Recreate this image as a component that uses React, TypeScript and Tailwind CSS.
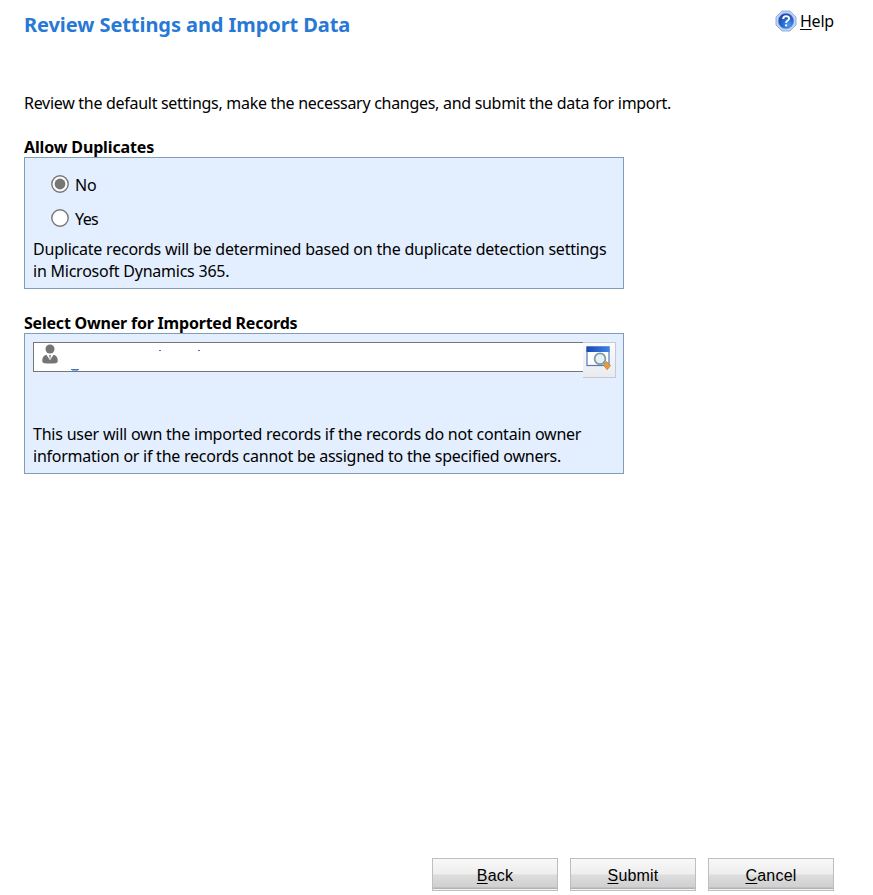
import type { ReactNode } from "react";

function Radio({ checked }: { checked?: boolean }) {
  return (
    <svg width="18" height="18" viewBox="0 0 18 18" className="mb-[2px] block shrink-0">
      <circle cx="9" cy="9" r="8.2" fill="#fff" stroke="#767676" strokeWidth="1.4" />
      {checked && <circle cx="9" cy="9" r="5.4" fill="#767676" />}
    </svg>
  );
}

function HelpIcon() {
  return (
    <svg width="22" height="22" viewBox="0 0 22 22" className="block shrink-0">
      <defs>
        <radialGradient id="helpFill" cx="0.65" cy="0.75" r="0.75">
          <stop offset="0" stopColor="#4b9bf0" />
          <stop offset="0.55" stopColor="#2865d0" />
          <stop offset="1" stopColor="#1d45ae" />
        </radialGradient>
      </defs>
      <path d="M7 1h8l6 6v8l-6 6H7l-6-6V7z" fill="#c3d5ee" stroke="#8fafdc" strokeWidth="1" strokeLinejoin="round" />
      <circle cx="11" cy="11" r="7.8" fill="url(#helpFill)" stroke="#7fa5df" strokeWidth="0.6" />
      <path d="M8.2 8.9c0-3.6 5.9-3.5 5.9-.5 0 2.1-3 2.2-3 4.5" fill="none" stroke="#fff" strokeWidth="1.9" />
      <circle cx="11.1" cy="15.4" r="1.1" fill="#fff" />
    </svg>
  );
}

function PersonIcon() {
  return (
    <svg width="16" height="20" viewBox="0 0 16 20" className="block shrink-0">
      <circle cx="8" cy="5" r="4.5" fill="#747474" />
      <path d="M4.4 10.8Q.3 12 .3 16v1.6q0 1.2 2 1.6 5.7.8 11.4 0 2-.4 2-1.6V16q0-4-4.1-5.2L8 16.2z" fill="#747474" />
      <path d="m7 11.3 1-.6 1 .6-.4 1.8-.6 2.4-.6-2.4z" fill="#8a8a8a" />
    </svg>
  );
}

function LookupIcon() {
  return (
    <svg width="26" height="25" viewBox="0 0 26 25" className="block shrink-0">
      <defs>
        <linearGradient id="lookupBar" x2="1">
          <stop offset="0" stopColor="#1747b5" />
          <stop offset="1" stopColor="#3f82e6" />
        </linearGradient>
      </defs>
      <rect x="1" y="1" width="22" height="18.5" fill="#fff" stroke="#5878b8" strokeWidth="1.2" />
      <rect x="0.5" y="0.5" width="23" height="5.5" fill="url(#lookupBar)" />
      <path d="m18 17.4 2.5-1.9 4 4-3.3 4.2-3.2-4z" fill="#e59a40" stroke="#b8772e" strokeWidth="0.7" />
      <circle cx="14" cy="12.7" r="5.4" fill="#e4f2f6" stroke="#7f9aa8" strokeWidth="1.8" />
    </svg>
  );
}

function ActionButton({ children }: { children: ReactNode }) {
  return (
    <button className="h-[33px] w-[126px] border border-[#bbbfc4] bg-[linear-gradient(to_bottom,#f8f8f8_0px,#eeeeee_15px,#dddddd_16px,#d0d0d0_28px,#b2b2b5_29px,#b2b2b5_30px,#f5f5f5_30px)] text-center font-['Liberation_Sans',Arial,sans-serif] text-base leading-[33px] tracking-[0.2px] text-black">
      {children}
    </button>
  );
}

function Key({ children }: { children: ReactNode }) {
  return <span className="underline decoration-1 underline-offset-2">{children}</span>;
}

export default function App() {
  return (
    <main className="flex h-[895px] w-[873px] flex-col bg-white pl-6 font-['Noto_Sans','Open_Sans',sans-serif] text-base leading-[22px] whitespace-nowrap text-black">
      <header className="flex h-[92px] items-start justify-between pr-[39px]">
        <h1 className="pt-3 text-xl leading-[26px] font-bold text-[#2779d5]">
          <span className="tracking-[-0.07px]">Review Settings and Import Data</span>
        </h1>
        <a className="flex items-center gap-[3px] pt-[10px]">
          <HelpIcon />
          <span className="tracking-[-0.2px]"><Key>H</Key>elp</span>
        </a>
      </header>
      <p><span className="tracking-[-0.29px]">Review the default settings, make the necessary changes, and submit the data for import.</span></p>

      <section className="mt-[22px] w-[600px]">
        <h2 className="h-[21px] font-bold"><span className="tracking-[-0.14px]">Allow Duplicates</span></h2>
        <div className="h-[132px] border border-[#809db9] bg-[#e3eeff] pt-4 pl-2">
          <div className="flex h-[22px] items-center gap-[6px] pl-[18px]">
            <Radio checked />
            <span className="tracking-[-0.2px]">No</span>
          </div>
          <div className="mt-3 flex h-[22px] items-center gap-[6px] pl-[18px]">
            <Radio />
            <span className="tracking-[-0.6px]">Yes</span>
          </div>
          <p className="mt-2">
            <span className="tracking-[-0.22px]">Duplicate records will be determined based on the duplicate detection settings</span>
            <br />
            <span className="tracking-[-0.23px]">in Microsoft Dynamics 365.</span>
          </p>
        </div>
      </section>

      <section className="mt-[23px] w-[600px]">
        <h2 className="h-[21px] font-bold"><span className="tracking-[-0.21px]">Select Owner for Imported Records</span></h2>
        <div className="h-[141px] border border-[#809db9] bg-[#e3eeff] pt-2 pl-2">
          <div className="flex h-[36px] items-start">
            <div className="relative h-[30px] w-[550px] border border-r-0 border-[#767676] bg-white pt-px pl-2">
              <PersonIcon />
              <i className="absolute top-[7px] left-[125px] h-px w-[2px] bg-[#3979c9]" />
              <i className="absolute top-[7px] left-[164px] h-px w-[2px] bg-[#3979c9]" />
              <i className="absolute top-[26px] left-[37px] h-px w-[8px] bg-[#3979c9]" />
              <i className="absolute top-[27px] left-[38px] h-px w-[6px] bg-[#8db2e0]" />
            </div>
            <div className="h-[36px] w-[33px] border-t border-r border-b border-[#c5cad2] bg-[linear-gradient(to_bottom,#fafbfc,#e9ebf0)] pt-[3px] pl-[3px]">
              <LookupIcon />
            </div>
          </div>
          <p className="mt-[45px]">
            <span className="tracking-[-0.22px]">This user will own the imported records if the records do not contain owner</span>
            <br />
            <span className="tracking-[-0.25px]">information or if the records cannot be assigned to the specified owners.</span>
          </p>
        </div>
      </section>

      <footer className="mt-auto flex justify-end gap-3 pr-[39px] pb-1">
        <ActionButton><Key>B</Key>ack</ActionButton>
        <ActionButton><Key>S</Key>ubmit</ActionButton>
        <ActionButton><Key>C</Key>ancel</ActionButton>
      </footer>
    </main>
  );
}
